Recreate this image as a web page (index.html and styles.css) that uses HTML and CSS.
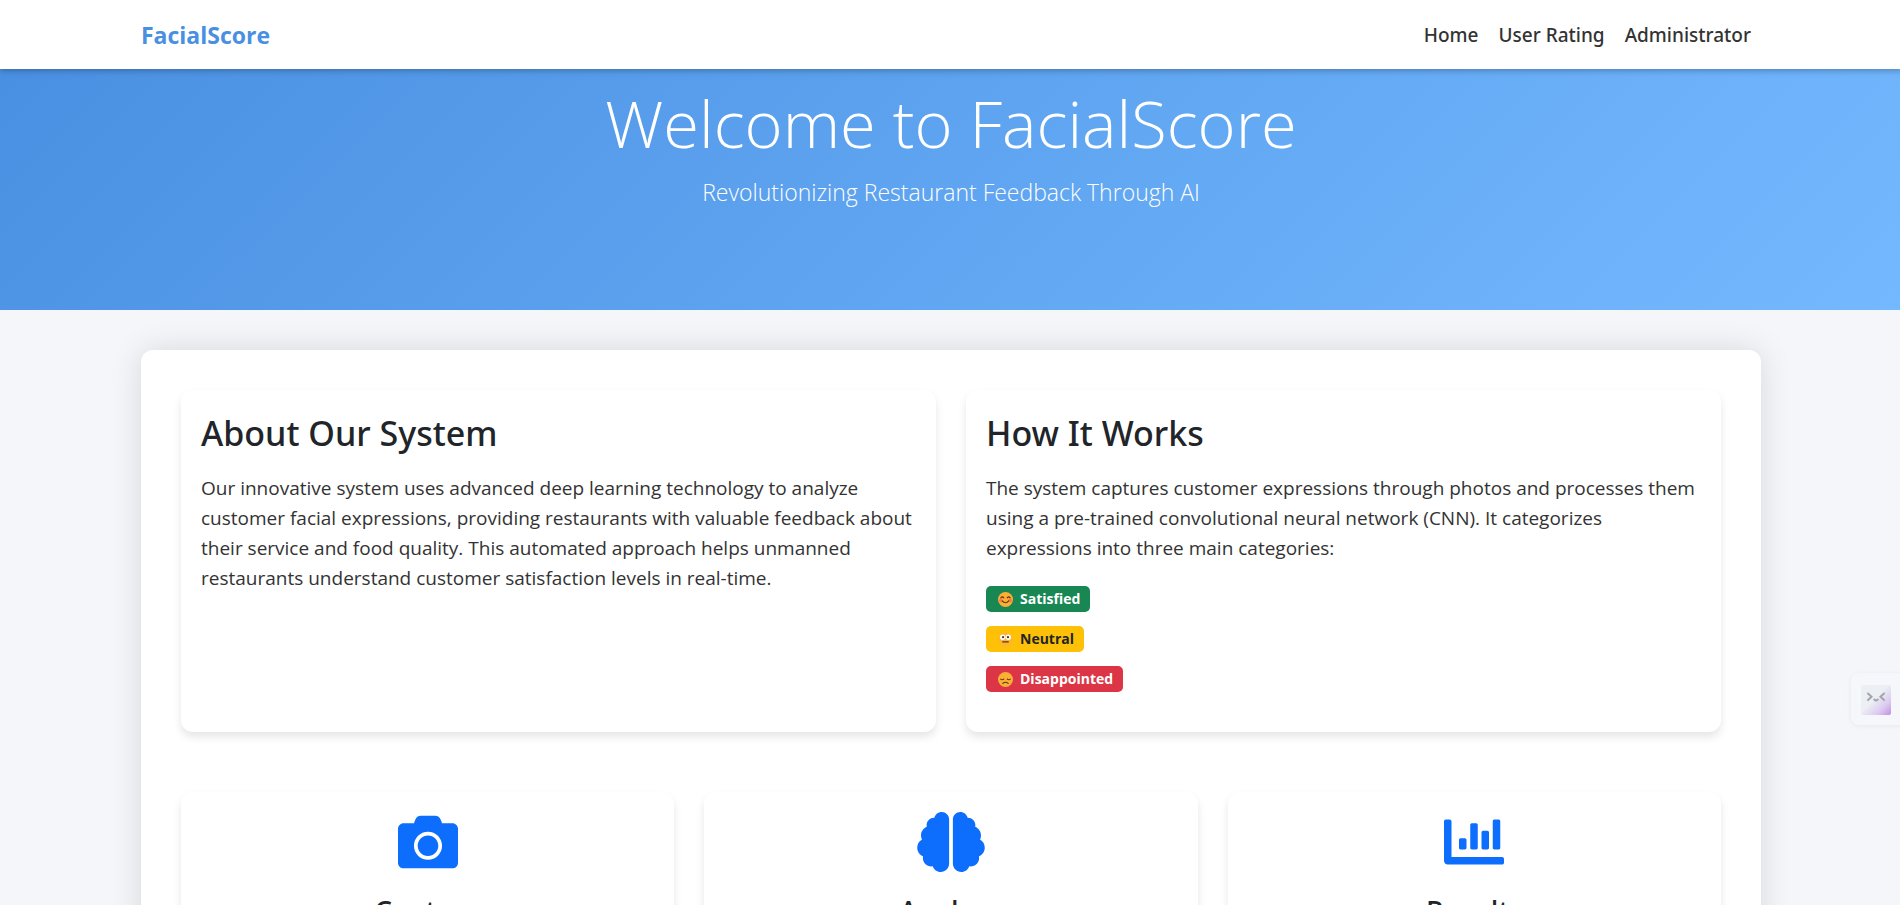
FILE: index.html
```html
<!DOCTYPE html>
<html lang="en">
<head>
<meta charset="utf-8">
<meta name="viewport" content="width=device-width, initial-scale=1">
<title>FacialScore</title>
<link rel="stylesheet" href="styles.css">
</head>
<body>
<nav class="navbar">
  <div class="container navbar-inner">
    <a class="brand" href="#">FacialScore</a>
    <ul class="nav-links">
      <li><a href="#">Home</a></li>
      <li><a href="#">User Rating</a></li>
      <li><a href="#">Administrator</a></li>
    </ul>
  </div>
</nav>
<header class="hero">
  <h1>Welcome to FacialScore</h1>
  <p>Revolutionizing Restaurant Feedback Through AI</p>
</header>
<main class="container panel">
  <section class="row row-two">
    <article class="card">
      <h2>About Our System</h2>
      <p>Our innovative system uses advanced deep learning technology to analyze customer facial expressions, providing restaurants with valuable feedback about their service and food quality. This automated approach helps unmanned restaurants understand customer satisfaction levels in real-time.</p>
    </article>
    <article class="card">
      <h2>How It Works</h2>
      <p>The system captures customer expressions through photos and processes them using a pre-trained convolutional neural network (CNN). It categorizes expressions into three main categories:</p>
      <ul class="badges">
        <li><span class="badge satisfied"><svg class="emoji" viewBox="0 0 16 16" aria-hidden="true"><circle cx="8" cy="8" r="8" fill="#fcaf35"/><circle cx="3" cy="9" r="2" fill="#ff7a45"/><circle cx="13" cy="9" r="2" fill="#ff7a45"/><path d="M3 6.2q1.6-2 3.2 0M9.800 6.200q1.600-2 3.200 0M4.500 9.500q3.500 4 7 0" fill="none" stroke="#5a3512" stroke-width="1.200" stroke-linecap="round"/></svg>Satisfied</span></li>
        <li><span class="badge neutral"><svg class="emoji" viewBox="0 0 16 16" aria-hidden="true"><circle cx="8" cy="8" r="7.500" fill="#fdb52e"/><circle cx="5" cy="5.500" r="2.900" fill="#fff"/><circle cx="11" cy="5.500" r="2.900" fill="#fff"/><circle cx="5.400" cy="5.500" r="1.200" fill="#5a3512"/><circle cx="10.600" cy="5.500" r="1.200" fill="#5a3512"/><path d="M5 10.500h6" stroke="#5a3512" stroke-width="1.200" stroke-linecap="round"/></svg>Neutral</span></li>
        <li><span class="badge disappointed"><svg class="emoji" viewBox="0 0 16 16" aria-hidden="true"><circle cx="8" cy="8" r="8" fill="#fcaf35"/><path d="M2.800 7.500q1.600 1.400 3.400 0M9.800 7.500q1.800 1.400 3.400 0M5 12.300q3-2.600 6 0" fill="none" stroke="#5a3512" stroke-width="1.100" stroke-linecap="round"/></svg>Disappointed</span></li>
      </ul>
    </article>
  </section>
  <section class="row row-three">
    <article class="card step">
      <svg class="icon" viewBox="0 0 512 512" aria-hidden="true"><path d="M512 144v288c0 26.500-21.500 48-48 48H48c-26.500 0-48-21.500-48-48V144c0-26.500 21.500-48 48-48h88l12.300-32.900c7-18.700 24.900-31.100 44.900-31.100h125.500c20 0 37.900 12.400 44.900 31.100L376 96h88c26.500 0 48 21.500 48 48zM376 288c0-66.200-53.800-120-120-120s-120 53.800-120 120 53.800 120 120 120 120-53.800 120-120zm-32 0c0 48.500-39.500 88-88 88s-88-39.500-88-88 39.500-88 88-88 88 39.500 88 88z"/></svg>
      <h3>Capture</h3>
    </article>
    <article class="card step">
      <svg class="icon icon-wide" viewBox="0 0 576 512" aria-hidden="true"><path d="M208 0c-29.900 0-54.700 20.500-61.800 48.200-.8 0-1.400-.2-2.200-.2-35.300 0-64 28.700-64 64 0 4.800.6 9.500 1.700 14C52.500 138 32 166.600 32 200c0 12.600 3.200 24.300 8.300 34.900C16.300 248.700 0 274.300 0 304c0 33.300 20.400 61.900 49.400 73.900-.9 4.600-1.400 9.300-1.400 14.100 0 39.800 32.200 72 72 72 4.100 0 8.100-.5 12-1.200 9.600 28.500 36.200 49.200 68 49.200 39.800 0 72-32.200 72-72V64c0-35.300-28.700-64-64-64zm368 304c0-29.700-16.300-55.300-40.300-69.100 5.200-10.600 8.300-22.300 8.300-34.900 0-33.400-20.500-62-49.700-74 1-4.500 1.700-9.200 1.700-14 0-35.300-28.700-64-64-64-.8 0-1.500.2-2.200.2C422.700 20.500 397.900 0 368 0c-35.300 0-64 28.600-64 64v376c0 39.800 32.200 72 72 72 31.800 0 58.400-20.700 68-49.200 3.900.7 7.900 1.200 12 1.200 39.800 0 72-32.200 72-72 0-4.800-.5-9.500-1.400-14.100 29-12 49.400-40.600 49.400-73.900z"/></svg>
      <h3>Analyze</h3>
    </article>
    <article class="card step">
      <svg class="icon" viewBox="0 0 512 512" aria-hidden="true"><path d="M332.800 320h38.400c6.400 0 12.800-6.400 12.800-12.800V172.800c0-6.400-6.400-12.800-12.800-12.800h-38.400c-6.400 0-12.800 6.400-12.800 12.800v134.400c0 6.400 6.400 12.800 12.800 12.800zm96 0h38.400c6.400 0 12.800-6.400 12.800-12.800V76.800c0-6.400-6.400-12.800-12.800-12.800h-38.400c-6.400 0-12.800 6.400-12.800 12.800v230.400c0 6.400 6.400 12.800 12.800 12.800zm-288 0h38.400c6.400 0 12.800-6.400 12.800-12.800v-70.400c0-6.400-6.400-12.800-12.800-12.800h-38.400c-6.400 0-12.800 6.400-12.800 12.800v70.400c0 6.400 6.400 12.800 12.800 12.800zm96 0h38.400c6.400 0 12.800-6.400 12.800-12.800V108.800c0-6.400-6.400-12.800-12.800-12.800h-38.400c-6.400 0-12.800 6.400-12.800 12.800v198.400c0 6.400 6.400 12.800 12.800 12.800zM496 384H64V80c0-8.840-7.160-16-16-16H16C7.160 64 0 71.160 0 80v336c0 17.670 14.330 32 32 32h464c8.840 0 16-7.160 16-16v-32c0-8.840-7.160-16-16-16z"/></svg>
      <h3>Results</h3>
    </article>
  </section>
</main>
<button class="assistant" type="button" aria-label="Open assistant">
  <svg viewBox="0 0 30 30" aria-hidden="true"><defs><linearGradient id="face" x1="0" y1="0" x2="1" y2="1"><stop offset="0.450" stop-color="#eceff3"/><stop offset="0.750" stop-color="#dccbf0"/><stop offset="1" stop-color="#c08fe0"/></linearGradient></defs><rect width="30" height="30" rx="2" fill="url(#face)"/><path d="M7 8.500l3.500 3.300L7 15M23 8.500l-3.500 3.300L23 15M13.300 14.500q1.700 2 3.400 0" fill="none" stroke="#a3a5ad" stroke-width="2" stroke-linecap="round"/></svg>
</button>
</body>
</html>
```
FILE: styles.css
```css
* {
  box-sizing: border-box;
}

html {
  scrollbar-width: none;
}

body {
  margin: 0;
  background: #f4f6fa;
  color: #212529;
  font-family: "Open Sans", "Noto Sans", sans-serif;
  font-size: 19px;
  line-height: 30px;
}

/* thin light edge along the right side of the window */
body::after {
  content: "";
  position: fixed;
  top: 0;
  right: 0;
  bottom: 0;
  z-index: 5;
  width: 2px;
  background: #fff;
}

h1,
h2,
h3,
p,
ul {
  margin: 0;
}

ul {
  padding: 0;
  list-style: none;
}

/* medium weight text */
h2,
h3,
.nav-links {
  font-family: "Noto Sans", "Open Sans", sans-serif;
  font-weight: 500;
}

.container {
  width: 100%;
  max-width: 1620px;
  margin: 0 auto;
}

.navbar {
  position: relative;
  z-index: 1;
  background: #fff;
  box-shadow: 0 2px 6px rgba(0, 0, 0, 0.25);
}

.navbar-inner {
  display: flex;
  align-items: center;
  justify-content: space-between;
  min-height: 69px;
  padding-right: 10px;
}

.brand {
  color: #4a90e2;
  font-size: 23px;
  font-weight: 700;
  text-decoration: none;
}

.nav-links {
  display: flex;
  gap: 20px;
}

.nav-links a {
  color: #333;
  text-decoration: none;
}

.hero {
  padding: 12px 20px 100px;
  background: linear-gradient(135deg, #4a90e2, #74b9ff);
  color: #fff;
  text-align: center;
}

.hero h1 {
  font-size: 65px;
  font-weight: 300;
  line-height: 84px;
}

.hero p {
  padding-top: 10px;
  font-size: 23px;
  font-weight: 300;
  line-height: 35px;
}

.panel {
  display: grid;
  gap: 60px;
  margin-top: 40px;
  margin-bottom: 40px;
  padding: 40px;
  border-radius: 12px;
  background: #fff;
  box-shadow: 0 0 32px rgba(0, 0, 0, 0.12);
}

.row {
  display: grid;
  gap: 30px;
}

.row-two {
  grid-template-columns: repeat(2, 1fr);
}

.row-three {
  grid-template-columns: repeat(3, 1fr);
}

.card {
  padding: 20px;
  border-radius: 12px;
  background: #fff;
  box-shadow: 0 5px 8px rgba(0, 0, 0, 0.1);
}

.card h2 {
  margin-bottom: 16px;
  font-size: 34px;
  line-height: 47px;
}

.card p {
  color: #333;
}

.badges {
  display: grid;
  gap: 10px;
  padding: 21px 0 18px;
}

.badges li {
  display: flex;
  align-items: center;
  height: 30px;
}

.badge {
  display: flex;
  align-items: center;
  gap: 7px;
  padding: 3px 10px 3px 12px;
  border-radius: 5px;
  color: #fff;
  font-size: 14px;
  font-weight: 700;
  line-height: 20px;
}

.emoji {
  width: 15px;
  height: 15px;
}

.satisfied {
  background: #198754;
}

.neutral {
  background: #ffc107;
  color: #212529;
}

.disappointed {
  background: #dc3545;
}

.step {
  display: flex;
  flex-direction: column;
  align-items: center;
  text-align: center;
}

.icon {
  width: 60px;
  height: 60px;
  fill: #0d6efd;
}

.icon-wide {
  width: 68px;
}

.step h3 {
  margin: 20px 0 10px;
  font-size: 28px;
  line-height: 38px;
}

.assistant {
  position: fixed;
  top: 673px;
  right: 0;
  z-index: 2;
  display: flex;
  padding: 12px 11px 10px 10px;
  border: 0;
  border-radius: 8px 0 0 8px;
  background: #f6f7fb;
  box-shadow: 0 1px 5px rgba(0, 0, 0, 0.06);
}

.assistant svg {
  width: 30px;
  height: 30px;
}
```
